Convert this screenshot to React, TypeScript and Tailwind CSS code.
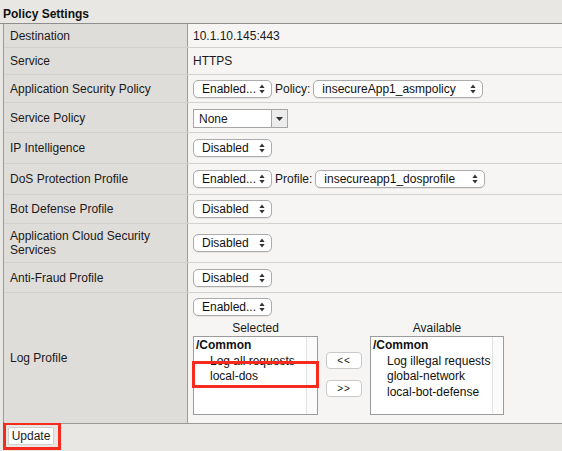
import React from 'react';

function Arrows() {
  return (
    <svg width="6" height="10" viewBox="0 0 6 10" className="shrink-0">
      <path d="M3 0.5 L5.6 4 L0.4 4 Z" fill="#333" />
      <path d="M3 9.5 L5.6 6 L0.4 6 Z" fill="#333" />
    </svg>
  );
}

function MacSelect({ value, width }: { value: string; width: string }) {
  return (
    <div
      className={`${width} h-[18px] flex items-center justify-between pl-[8px] pr-[6px] bg-white border border-[#ababab] rounded-[5px] text-[12px] leading-[16px] text-[#111] shadow-[0_1px_0_rgba(0,0,0,0.06)]`}
    >
      <span className="whitespace-nowrap overflow-hidden">{value}</span>
      <Arrows />
    </div>
  );
}

function Row({
  label,
  h,
  children,
  last,
}: {
  label: React.ReactNode;
  h: string;
  children?: React.ReactNode;
  last?: boolean;
}) {
  return (
    <div className={`flex ${h} ${last ? '' : 'border-b border-[#d3d1cd]'}`}>
      <div className="w-[184px] shrink-0 bg-[#dfddd9] border-r border-[#9c9a97] flex items-center pl-[6px] leading-[14px]">
        {label}
      </div>
      <div className="flex-1 bg-[#f6f5f3] flex items-center pl-[5px]">{children}</div>
    </div>
  );
}

function ListBox({ items, width }: { items: React.ReactNode; width: string }) {
  return (
    <div className={`${width} h-[79px] bg-white border border-[#9b9b9b] flex`}>
      <div className="flex-1 pl-[2px] pt-[1px] leading-[15.5px] text-[12px] text-[#111]">{items}</div>
      <div className="w-[11px] bg-[#fbfbfb] border-l border-[#e3e3e3]" />
    </div>
  );
}

export default function App() {
  return (
    <div
      className="w-[562px] h-[451px] bg-[#e8e7e4] text-[12px] text-[#1a1a1a] overflow-hidden"
      style={{ fontFamily: '"Liberation Sans", Arial, sans-serif' }}
    >
      <div className="h-[24px] flex items-center pl-[3px] pt-[4px] font-bold text-[12px] text-[#111] border-b border-[#8e8e8e]">
        Policy Settings
      </div>
      <div className="ml-[3px] border-l border-b border-[#9c9a97]">
        <Row label="Destination" h="h-[24px]">10.1.10.145:443</Row>
        <Row label="Service" h="h-[27px]">HTTPS</Row>
        <Row label="Application Security Policy" h="h-[28px]">
          <div className="flex items-center gap-[3px]">
            <MacSelect value="Enabled..." width="w-[79px]" />
            <span>Policy:</span>
            <MacSelect value="insecureApp1_asmpolicy" width="w-[170px]" />
          </div>
        </Row>
        <Row label="Service Policy" h="h-[30px]">
          <div className="flex items-center h-[19px] mt-[2px]">
            <div className="w-[79px] h-[19px] bg-white border border-[#a5a5a5] flex items-center pl-[5px]">None</div>
            <div className="w-[16px] h-[19px] bg-[#ececec] border border-l-0 border-[#a5a5a5] flex items-center justify-center">
              <svg width="7" height="4" viewBox="0 0 7 4">
                <path d="M0 0 L7 0 L3.5 4 Z" fill="#333" />
              </svg>
            </div>
          </div>
        </Row>
        <Row label="IP Intelligence" h="h-[31px]">
          <MacSelect value="Disabled" width="w-[79px]" />
        </Row>
        <Row label="DoS Protection Profile" h="h-[31px]">
          <div className="flex items-center gap-[3px]">
            <MacSelect value="Enabled..." width="w-[79px]" />
            <span>Profile:</span>
            <MacSelect value="insecureapp1_dosprofile" width="w-[170px]" />
          </div>
        </Row>
        <Row label="Bot Defense Profile" h="h-[29px]">
          <MacSelect value="Disabled" width="w-[79px]" />
        </Row>
        <Row
          label={
            <span>
              Application Cloud Security
              <br />
              Services
            </span>
          }
          h="h-[39px]"
        >
          <MacSelect value="Disabled" width="w-[79px]" />
        </Row>
        <Row label="Anti-Fraud Profile" h="h-[30px]">
          <MacSelect value="Disabled" width="w-[79px]" />
        </Row>
        <Row label="Log Profile" h="h-[130px]" last>
          <div className="flex flex-col pt-[5px] h-full">
            <MacSelect value="Enabled..." width="w-[79px]" />
            <div className="flex items-start mt-[4px]">
              <div className="flex flex-col items-center">
                <div className="h-[16px] leading-[16px]">Selected</div>
                <div className="relative">
                  <ListBox
                    width="w-[125px]"
                    items={
                      <>
                        <div className="font-bold">/Common</div>
                        <div className="pl-[14px]">Log all requests</div>
                        <div className="pl-[14px]">local-dos</div>
                      </>
                    }
                  />
                  <div className="absolute left-[-1px] top-[25px] w-[127px] h-[27px] border-[3px] border-[#f62b1d]" />
                </div>
              </div>
              <div className="flex flex-col gap-[11px] ml-[8px] mr-[8px] mt-[32px]">
                <div className="w-[36px] h-[17px] bg-white border border-[#c9c9c9] rounded-[4px] flex items-center justify-center text-[10px] tracking-[1px]">
                  &lt;&lt;
                </div>
                <div className="w-[36px] h-[17px] bg-white border border-[#c9c9c9] rounded-[4px] flex items-center justify-center text-[10px] tracking-[1px]">
                  &gt;&gt;
                </div>
              </div>
              <div className="flex flex-col items-center">
                <div className="h-[16px] leading-[16px]">Available</div>
                <ListBox
                  width="w-[134px]"
                  items={
                    <>
                      <div className="font-bold">/Common</div>
                      <div className="pl-[14px]">Log illegal requests</div>
                      <div className="pl-[14px]">global-network</div>
                      <div className="pl-[14px]">local-bot-defense</div>
                    </>
                  }
                />
              </div>
            </div>
          </div>
        </Row>
      </div>
      <div className="pl-[3px] -mt-[2px]">
        <div className="w-[58px] h-[28px] border-[3px] border-[#f62b1d] flex items-center pl-[2px]">
          <div className="w-[46px] h-[18px] bg-white border border-[#d0d0d0] rounded-[2px] flex items-center justify-center text-[12px]">
            Update
          </div>
        </div>
      </div>
    </div>
  );
}
